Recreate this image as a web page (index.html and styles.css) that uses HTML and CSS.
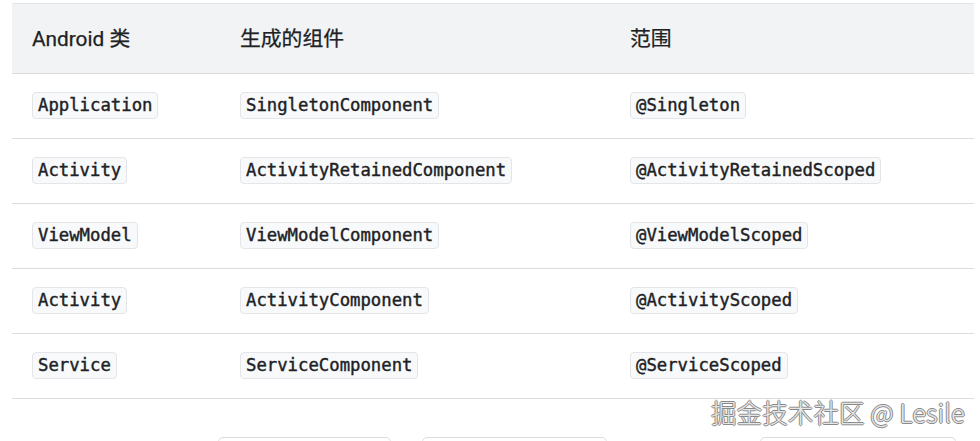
FILE: index.html
```html
<!DOCTYPE html>
<html lang="zh">
<head>
<meta charset="utf-8">
<link rel="stylesheet" href="styles.css">
</head>
<body>
<div class="page">
  <table class="grid">
    <thead>
      <tr><th class="c1">Android 类</th><th class="c2">生成的组件</th><th class="c3">范围</th></tr>
    </thead>
    <tbody>
      <tr><td><code>Application</code></td><td><code>SingletonComponent</code></td><td><code>@Singleton</code></td></tr>
      <tr><td><code>Activity</code></td><td><code>ActivityRetainedComponent</code></td><td><code>@ActivityRetainedScoped</code></td></tr>
      <tr><td><code>ViewModel</code></td><td><code>ViewModelComponent</code></td><td><code>@ViewModelScoped</code></td></tr>
      <tr><td><code>Activity</code></td><td><code>ActivityComponent</code></td><td><code>@ActivityScoped</code></td></tr>
      <tr><td><code>Service</code></td><td><code>ServiceComponent</code></td><td><code>@ServiceScoped</code></td></tr>
    </tbody>
  </table>
  <div class="buttons">
    <div class="btn b1"></div>
    <div class="btn b2"></div>
    <div class="btn b3"></div>
  </div>
  <div class="watermark">掘金技术社区 @ Lesile</div>
</div>
</body>
</html>
```
FILE: styles.css
```css
html, body { margin: 0; padding: 0; background: #fff; }
body { font-family: Roboto, "Noto Sans CJK SC", sans-serif; color: #202124; }
.page { position: relative; width: 980px; height: 441px; overflow: hidden; padding: 3px 6px 0 12px; box-sizing: border-box; }
.grid { width: 962px; border-collapse: collapse; table-layout: fixed; border-top: 1px solid #e3e5e8; }
.grid th { background: #f1f3f4; height: 70px; padding: 0 0 3px 20px; text-align: left; font-size: 20.8px; font-weight: 400; border-bottom: 1px solid #dadce0; box-sizing: border-box; -webkit-text-stroke: 0.25px #202124; }
.c1 { width: 208px; }
.c2 { width: 390px; }
.grid td { height: 65px; padding: 0 0 0 20px; border-bottom: 1px solid #dadce0; box-sizing: border-box; vertical-align: middle; }
code { display: inline-block; font-family: "DejaVu Sans Mono", monospace; font-size: 17.3px; line-height: 25px; padding: 0 5px 0 5px; background: #f8f9fa; border: 1px solid #e3e5e8; border-radius: 4px; color: #202124; position: relative; top: -1px; -webkit-text-stroke: 0.4px #202124; }
.buttons { display: flex; margin-top: 38px; }
.btn { height: 40px; border: 1px solid #dadce0; border-radius: 5px; box-sizing: border-box; }
.b1 { width: 173px; margin-left: 206px; }
.b2 { width: 185px; margin-left: 31px; }
.b3 { width: 196px; margin-left: 153px; }
.watermark { position: absolute; left: 711px; top: 393px; font-family: "Noto Sans CJK SC", sans-serif; font-size: 25.6px; font-weight: 300; color: #e6e6e6; white-space: nowrap; text-shadow: -1px 0 #8a8a8a, 1px 0 #8a8a8a, 0 -1px #8a8a8a, 0 1px #8a8a8a; }
```
